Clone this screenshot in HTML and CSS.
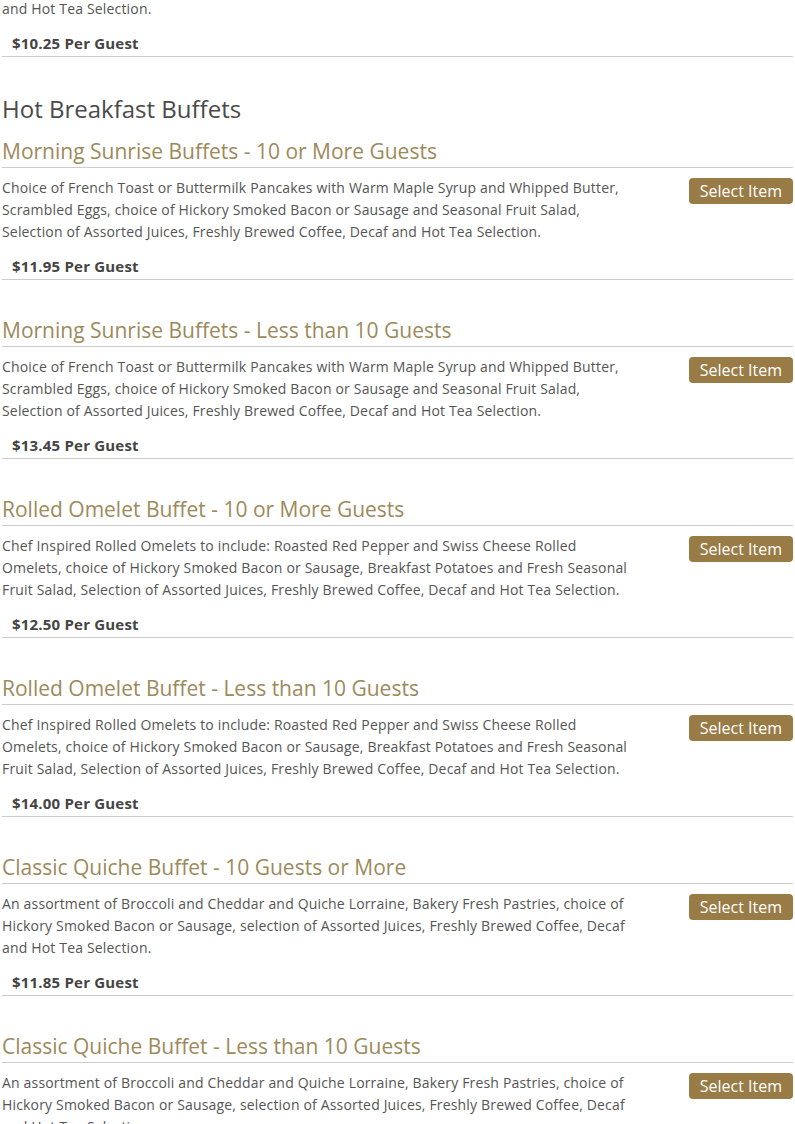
FILE: index.html
```html
<!DOCTYPE html>
<html lang="en">
<head>
<meta charset="utf-8">
<title>Hot Breakfast Buffets</title>
<link rel="stylesheet" href="styles.css">
</head>
<body>
<main class="menu">
  <section class="item item--first">
    <h3 class="item-title">Continental Breakfast Buffet - Less than 10 Guests</h3>
    <div class="item-body">
      <p class="item-desc">An assortment of Bakery Fresh Pastries, Muffins and Bagels with Cream Cheese, choice of Hickory Smoked Bacon or Sausage, selection of Assorted Juices, Freshly Brewed Coffee, Decaf and Hot Tea Selection.</p>
      <button class="select-btn" type="button">Select Item</button>
    </div>
    <p class="item-price">$10.25 Per Guest</p>
  </section>

  <h2 class="category">Hot Breakfast Buffets</h2>

  <section class="item item--lead">
    <h3 class="item-title">Morning Sunrise Buffets - 10 or More Guests</h3>
    <div class="item-body">
      <p class="item-desc">Choice of French Toast or Buttermilk Pancakes with Warm Maple Syrup and Whipped Butter, Scrambled Eggs, choice of Hickory Smoked Bacon or Sausage and Seasonal Fruit Salad, Selection of Assorted Juices, Freshly Brewed Coffee, Decaf and Hot Tea Selection.</p>
      <button class="select-btn" type="button">Select Item</button>
    </div>
    <p class="item-price">$11.95 Per Guest</p>
  </section>

  <section class="item">
    <h3 class="item-title">Morning Sunrise Buffets - Less than 10 Guests</h3>
    <div class="item-body">
      <p class="item-desc">Choice of French Toast or Buttermilk Pancakes with Warm Maple Syrup and Whipped Butter, Scrambled Eggs, choice of Hickory Smoked Bacon or Sausage and Seasonal Fruit Salad, Selection of Assorted Juices, Freshly Brewed Coffee, Decaf and Hot Tea Selection.</p>
      <button class="select-btn" type="button">Select Item</button>
    </div>
    <p class="item-price">$13.45 Per Guest</p>
  </section>

  <section class="item">
    <h3 class="item-title">Rolled Omelet Buffet - 10 or More Guests</h3>
    <div class="item-body">
      <p class="item-desc">Chef Inspired Rolled Omelets to include: Roasted Red Pepper and Swiss Cheese Rolled Omelets, choice of Hickory Smoked Bacon or Sausage, Breakfast Potatoes and Fresh Seasonal Fruit Salad, Selection of Assorted Juices, Freshly Brewed Coffee, Decaf and Hot Tea Selection.</p>
      <button class="select-btn" type="button">Select Item</button>
    </div>
    <p class="item-price">$12.50 Per Guest</p>
  </section>

  <section class="item">
    <h3 class="item-title">Rolled Omelet Buffet - Less than 10 Guests</h3>
    <div class="item-body">
      <p class="item-desc">Chef Inspired Rolled Omelets to include: Roasted Red Pepper and Swiss Cheese Rolled Omelets, choice of Hickory Smoked Bacon or Sausage, Breakfast Potatoes and Fresh Seasonal Fruit Salad, Selection of Assorted Juices, Freshly Brewed Coffee, Decaf and Hot Tea Selection.</p>
      <button class="select-btn" type="button">Select Item</button>
    </div>
    <p class="item-price">$14.00 Per Guest</p>
  </section>

  <section class="item">
    <h3 class="item-title">Classic Quiche Buffet - 10 Guests or More</h3>
    <div class="item-body">
      <p class="item-desc">An assortment of Broccoli and Cheddar and Quiche Lorraine, Bakery Fresh Pastries, choice of Hickory Smoked Bacon or Sausage, selection of Assorted Juices, Freshly Brewed Coffee, Decaf and Hot Tea Selection.</p>
      <button class="select-btn" type="button">Select Item</button>
    </div>
    <p class="item-price">$11.85 Per Guest</p>
  </section>

  <section class="item">
    <h3 class="item-title">Classic Quiche Buffet - Less than 10 Guests</h3>
    <div class="item-body">
      <p class="item-desc">An assortment of Broccoli and Cheddar and Quiche Lorraine, Bakery Fresh Pastries, choice of Hickory Smoked Bacon or Sausage, selection of Assorted Juices, Freshly Brewed Coffee, Decaf and Hot Tea Selection.</p>
      <button class="select-btn" type="button">Select Item</button>
    </div>
    <p class="item-price">$13.25 Per Guest</p>
  </section>
</main>
</body>
</html>
```
FILE: styles.css
```css
html, body {
  margin: 0;
  padding: 0;
  background: #ffffff;
}

body {
  font-family: "Open Sans", "Liberation Sans", sans-serif;
  color: #555555;
  overflow: hidden;
}

.menu {
  padding: 0 2px;
  margin-top: -87px;
}

.category {
  margin: 34px 0 9px;
  font-size: 24px;
  line-height: 36px;
  font-weight: 400;
  color: #4a4a4a;
}

.item {
  padding-top: 35px;
}

.item--first,
.item--lead {
  padding-top: 0;
}

.item-title {
  margin: 0;
  padding-bottom: 1px;
  font-size: 21px;
  line-height: 30px;
  font-weight: 400;
  color: #9c8a5b;
  border-bottom: 1px solid #cccccc;
}

.item-body {
  display: flex;
  justify-content: space-between;
  align-items: flex-start;
  margin-top: 9px;
}

.item-desc {
  margin: 0;
  width: 632px;
  font-size: 14px;
  letter-spacing: 0.17px;
  line-height: 22px;
}

.select-btn {
  margin-top: 1px;
  height: 26px;
  padding: 0 11px;
  border: 0;
  border-radius: 4px;
  background: #997b46;
  color: #ffffff;
  font-family: "Open Sans", "Liberation Sans", sans-serif;
  font-size: 16px;
  line-height: 26px;
  cursor: pointer;
}

.item-price {
  margin: 12px 0 0;
  padding: 0 0 2px 10px;
  font-size: 15px;
  letter-spacing: 0.2px;
  line-height: 22px;
  font-weight: 700;
  color: #444444;
  border-bottom: 1px solid #cccccc;
}
```
